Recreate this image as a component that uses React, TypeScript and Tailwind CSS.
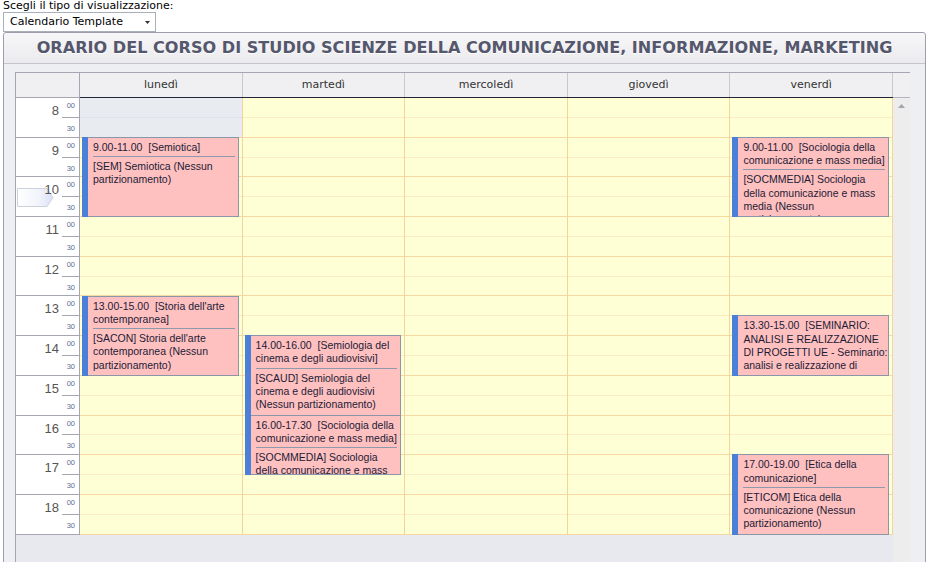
import React from "react";

type Appt = {
  day: number;
  start: number;
  end: number;
  title: string[];
  body: string[];
};

const SLOT = 19.85; // px per half hour
const HOURS = [8, 9, 10, 11, 12, 13, 14, 15, 16, 17, 18];
const DAYS = ["lunedì", "martedì", "mercoledì", "giovedì", "venerdì"];

const APPTS: Appt[] = [
  {
    day: 0,
    start: 9,
    end: 11,
    title: ["9.00-11.00\u00a0 [Semiotica]"],
    body: ["[SEM] Semiotica (Nessun", "partizionamento)"],
  },
  {
    day: 0,
    start: 13,
    end: 15,
    title: ["13.00-15.00\u00a0 [Storia dell'arte", "contemporanea]"],
    body: ["[SACON] Storia dell'arte", "contemporanea (Nessun", "partizionamento)"],
  },
  {
    day: 1,
    start: 14,
    end: 16,
    title: ["14.00-16.00\u00a0 [Semiologia del", "cinema e degli audiovisivi]"],
    body: ["[SCAUD] Semiologia del", "cinema e degli audiovisivi", "(Nessun partizionamento)"],
  },
  {
    day: 1,
    start: 16,
    end: 17.5,
    title: ["16.00-17.30\u00a0 [Sociologia della", "comunicazione e mass media]"],
    body: ["[SOCMMEDIA] Sociologia", "della comunicazione e mass", "media (Nessun", "partizionamento)"],
  },
  {
    day: 4,
    start: 9,
    end: 11,
    title: ["9.00-11.00\u00a0 [Sociologia della", "comunicazione e mass media]"],
    body: ["[SOCMMEDIA] Sociologia", "della comunicazione e mass", "media (Nessun", "partizionamento)"],
  },
  {
    day: 4,
    start: 13.5,
    end: 15,
    title: [
      "13.30-15.00\u00a0 [SEMINARIO:",
      "ANALISI E REALIZZAZIONE",
      "DI PROGETTI UE - Seminario:",
      "analisi e realizzazione di",
      "progetti U.E.]",
    ],
    body: ["[SEMUE] Seminario"],
  },
  {
    day: 4,
    start: 17,
    end: 19,
    title: ["17.00-19.00\u00a0 [Etica della", "comunicazione]"],
    body: ["[ETICOM] Etica della", "comunicazione (Nessun", "partizionamento)"],
  },
];

function Appointment({ a }: { a: Appt }) {
  const top = (a.start - 8) * 2 * SLOT - 1;
  const height = (a.end - a.start) * 2 * SLOT + 1;
  return (
    <div
      className="absolute left-[2px] right-[3px] flex overflow-hidden font-['Liberation_Sans',Arial,sans-serif] text-[10.5px] leading-[13.3px] text-[#1c1c36]"
      style={{ top, height }}
    >
      <div className="w-[6px] shrink-0 bg-[#4a80d8]" />
      <div className="flex-1 min-w-0 overflow-hidden border-y border-r border-[#8b96a8] bg-[#ffc0c0] pl-[5px] pr-[3px] pt-[3px]">
        {a.title.map((l, i) => (
          <div key={i} className="whitespace-nowrap">{l}</div>
        ))}
        <div className="h-px bg-[#8e9aac] mt-[2px] mb-[3px]" />
        {a.body.map((l, i) => (
          <div key={i} className="whitespace-nowrap">{l}</div>
        ))}
      </div>
    </div>
  );
}

function DayColumn({ index }: { index: number }) {
  const cells = Array.from({ length: 22 }, (_, i) => i);
  return (
    <div className="relative border-r border-[#f3d49c]">
      {cells.map((i) => {
        const offHours = index === 0 && i < 2;
        const half = i % 2 === 0;
        return (
          <div
            key={i}
            className={
              "h-[19.85px] border-b " +
              (offHours
                ? half
                  ? "bg-[#e8ebf0] border-[#dfe2e9]"
                  : "bg-[#e8ebf0] border-[#f3d49c]"
                : half
                ? "bg-[#ffffd5] border-[#fbecc4]"
                : "bg-[#ffffd5] border-[#f5d8a2]")
            }
          />
        );
      })}
      {APPTS.filter((a) => a.day === index).map((a, i) => (
        <Appointment key={i} a={a} />
      ))}
    </div>
  );
}

export default function App() {
  return (
    <div className="w-[940px] h-[562px] overflow-hidden bg-white font-['DejaVu_Sans',Verdana,sans-serif] text-[#222]">
      <div className="pl-[3px] text-[11px] leading-[12px] h-[12px] text-black">
        Scegli il tipo di visualizzazione:
      </div>
      <div className="ml-[3px] w-[153px] h-[20px] border border-[#a9b0ba] bg-white flex items-center justify-between pl-[6px] pr-[5px] text-[11px] text-black">
        <span>Calendario Template</span>
        <svg width="5" height="3" viewBox="0 0 5 3">
          <path d="M0 0h5L2.5 3z" fill="#333" />
        </svg>
      </div>

      {/* Panel */}
      <div className="ml-[3px] w-[923px] h-[540px] border border-[#9d9dab] bg-[#eeeff3] flex flex-col rounded-tl-[3px] rounded-tr-[3px]">
        <div className="h-[31px] shrink-0 border-b border-[#c3c4cc] bg-gradient-to-b from-[#f7f7f9] to-[#ebebef] flex items-center justify-center font-bold text-[16.1px] text-[#55576c] [text-shadow:0_1px_0_#ffffff] whitespace-nowrap rounded-t-[3px]">
          ORARIO DEL CORSO DI STUDIO SCIENZE DELLA COMUNICAZIONE, INFORMAZIONE, MARKETING
        </div>

        <div className="pt-[8px] pl-[11px]">
          <div className="w-[895px] border-l border-t border-[#a6a6b2]">
            {/* Header */}
            <div className="flex h-[25px] bg-[#f0f0f2] text-[11px] text-[#333]">
              <div className="w-[64px] shrink-0 border-r border-b border-[#a6a6b2]" />
              <div className="grid grid-cols-5 w-[813px] border-b border-[#23233a]">
                {DAYS.map((d) => (
                  <div key={d} className="flex items-center justify-center border-r border-[#c8c8d0]">
                    {d}
                  </div>
                ))}
              </div>
              <div className="w-[17px] shrink-0 border-b border-[#b4b4be]" />
            </div>

            {/* Body */}
            <div className="flex h-[470px] bg-[#e8e9ee]">
              {/* Time column */}
              <div className="relative w-[64px] shrink-0 self-start border-r border-[#a6a6b2] bg-white">
                <svg className="absolute left-[1px] top-[90px]" width="37" height="19" viewBox="0 0 37 19">
                  <defs>
                    <linearGradient id="ti" x1="0" y1="0" x2="1" y2="0">
                      <stop offset="0" stopColor="#ffffff" />
                      <stop offset="0.6" stopColor="#f2f4fb" />
                      <stop offset="1" stopColor="#d9e1f5" />
                    </linearGradient>
                  </defs>
                  <path d="M0.5 0.5H30L36 9.5L30 18.5H0.5Z" fill="url(#ti)" stroke="#cdd1dc" />
                </svg>
                {HOURS.map((h) => (
                  <div key={h} className="relative flex h-[39.7px] border-b border-[#a6a6b2]">
                    <div className="flex-1 text-right pr-[3px] pt-[6px] font-['Liberation_Sans',Arial,sans-serif] text-[13px] leading-none text-[#555]">
                      {h}
                    </div>
                    <div className="w-[17px] flex flex-col font-['Liberation_Sans',Arial,sans-serif] text-[7.5px] leading-none text-[#5d6d92]">
                      <div className="h-[19.85px] border-b border-[#a6a6b2] text-right pr-[4px] pt-[4px]">00</div>
                      <div className="flex-1 text-right pr-[4px] pt-[7px]">30</div>
                    </div>
                  </div>
                ))}
              </div>

              {/* Day columns */}
              <div className="grid grid-cols-5 w-[813px] self-start overflow-hidden h-[436.7px]">
                {DAYS.map((d, i) => (
                  <DayColumn key={d} index={i} />
                ))}
              </div>

              {/* Scrollbar */}
              <div className="w-[17px] shrink-0 bg-[#ededed] flex justify-center pt-[6px]">
                <svg width="7" height="4" viewBox="0 0 7 4">
                  <path d="M0 4L3.5 0L7 4z" fill="#a4a4a8" />
                </svg>
              </div>
            </div>
          </div>
        </div>
      </div>
    </div>
  );
}
